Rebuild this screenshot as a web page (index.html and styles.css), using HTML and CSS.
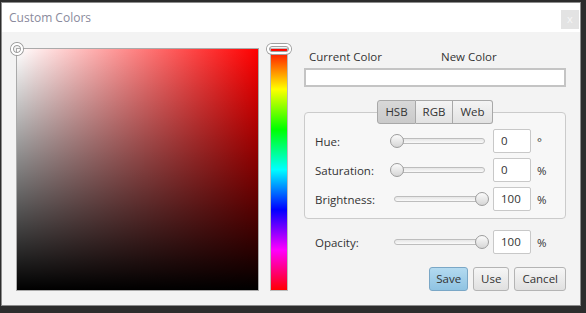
FILE: index.html
```html
<!DOCTYPE html>
<html>
<head>
<meta charset="utf-8">
<link rel="stylesheet" href="styles.css">
</head>
<body>
<div class="dialog">
  <div class="titlebar">
    <span class="title">Custom Colors</span>
    <span class="close">x</span>
  </div>
  <div class="content">
    <div class="picker">
      <div class="square">
        <div class="square-dark"></div>
        <div class="square-handle"></div>
      </div>
      <div class="huebar">
        <div class="hue-handle"></div>
      </div>
    </div>
    <div class="panel">
      <div class="color-labels">
        <span class="cur-label">Current Color</span>
        <span class="new-label">New Color</span>
      </div>
      <div class="preview"></div>
      <div class="tabs">
        <span class="tab active">HSB</span><span class="tab">RGB</span><span class="tab">Web</span>
      </div>
      <div class="group">
        <div class="row">
          <span class="label">Hue:</span>
          <div class="slider"><div class="track"></div><div class="thumb thumb-min"></div></div>
          <span class="field">0</span>
          <span class="unit">°</span>
        </div>
        <div class="row">
          <span class="label">Saturation:</span>
          <div class="slider"><div class="track"></div><div class="thumb thumb-min"></div></div>
          <span class="field">0</span>
          <span class="unit">%</span>
        </div>
        <div class="row">
          <span class="label">Brightness:</span>
          <div class="slider"><div class="track"></div><div class="thumb thumb-max"></div></div>
          <span class="field">100</span>
          <span class="unit">%</span>
        </div>
      </div>
      <div class="row opacity-row">
        <span class="label">Opacity:</span>
        <div class="slider"><div class="track"></div><div class="thumb thumb-max"></div></div>
        <span class="field">100</span>
        <span class="unit">%</span>
      </div>
      <div class="buttons">
        <span class="btn btn-default">Save</span>
        <span class="btn">Use</span>
        <span class="btn">Cancel</span>
      </div>
    </div>
  </div>
</div>
</body>
</html>
```
FILE: styles.css
```css
html, body {
  margin: 0;
  padding: 0;
  background: #2c2c2c;
  width: 586px;
  height: 313px;
  overflow: hidden;
}
body {
  font-family: "Open Sans", "Noto Sans", sans-serif;
  font-size: 11px;
  color: #333;
}
.dialog {
  margin: 2px 0 0 1px;
  width: 580px;
  height: 304px;
  box-sizing: border-box;
  border: 1px solid #8c8c8c;
  background: #f3f3f3;
  display: flex;
  flex-direction: column;
}
.titlebar {
  height: 29px;
  background: #ffffff;
  display: flex;
  align-items: flex-start;
  padding-left: 7px;
  padding-right: 1px;
  flex: none;
}
.title {
  margin-top: 6px;
  font-size: 12px;
  color: #8a8a9c;
  line-height: 18px;
}
.close {
  margin-left: auto;
  margin-top: 7px;
  width: 18px;
  height: 19px;
  background: #e3e3e3;
  color: #f6f6f6;
  font-size: 11px;
  line-height: 18px;
  text-align: center;
}
.content {
  display: flex;
  padding: 16px 0 0 14px;
}
.picker {
  display: flex;
  gap: 11px;
}
.square {
  position: relative;
  width: 243px;
  height: 243px;
  box-sizing: border-box;
  border: 1px solid #aaaaaa;
  background: linear-gradient(to right, #ffffff, #ff0000);
}
.square-dark {
  position: absolute;
  inset: 0;
  background: linear-gradient(to bottom, rgba(0,0,0,0), #000000);
}
.square-handle {
  position: absolute;
  left: -6px;
  top: -6px;
  width: 8px;
  height: 8px;
  border-radius: 50%;
  border: 2px solid #ffffff;
  box-shadow: 0 0 0 1px #9a9a9a, inset 0 0 0 1px #9a9a9a;
  background: transparent;
}
.huebar {
  position: relative;
  width: 18px;
  height: 243px;
  box-sizing: border-box;
  border: 1px solid #bbbbbb;
  background: linear-gradient(to bottom, #ff0000 0%, #ffff00 16.67%, #00ff00 33.33%, #00ffff 50%, #0000ff 66.67%, #ff00ff 83.33%, #ff0000 100%);
}
.hue-handle {
  position: absolute;
  left: -4px;
  top: -5px;
  width: 20px;
  height: 6px;
  border-radius: 5px;
  border: 2px solid #ffffff;
  box-shadow: 0 0 0 1px #a0a0a0, inset 0 0 0 1px #a0a0a0;
}
.panel {
  margin-left: 16px;
  width: 262px;
  display: flex;
  flex-direction: column;
}
.color-labels {
  display: flex;
  height: 18px;
  line-height: 18px;
  font-size: 11.5px;
  margin-top: 0;
}
.cur-label {
  margin-left: 5px;
}
.new-label {
  margin-left: 59px;
}
.preview {
  margin-top: 2px;
  height: 19px;
  box-sizing: border-box;
  border: 2px solid #c4c4c4;
  background: #ffffff;
}
.tabs {
  margin-top: 13px;
  align-self: center;
  display: flex;
  position: relative;
  z-index: 1;
}
.tab {
  height: 24px;
  box-sizing: border-box;
  line-height: 22px;
  padding: 0 7px;
  border: 1px solid #a8a8a8;
  border-left-width: 0;
  background: linear-gradient(to bottom, #f4f4f4, #e2e2e2);
  font-size: 11.5px;
}
.tab:first-child {
  border-left-width: 1px;
  border-radius: 3px 0 0 3px;
}
.tab:last-child {
  border-radius: 0 3px 3px 0;
}
.tab.active {
  background: linear-gradient(to bottom, #d8d8d8, #cacaca);
}
.group {
  margin-top: -12px;
  height: 107px;
  box-sizing: border-box;
  border: 1px solid #cbcbcb;
  border-radius: 4px;
  background: #f7f7f7;
  padding: 16px 0 0 10px;
  display: flex;
  flex-direction: column;
  gap: 5px;
}
.row {
  display: flex;
  align-items: center;
  height: 24px;
}
.label {
  width: 75px;
  font-size: 11.5px;
}
.slider {
  position: relative;
  width: 99px;
  height: 14px;
}
.track {
  position: absolute;
  left: 4px;
  right: 4px;
  top: 4px;
  height: 6px;
  box-sizing: border-box;
  border: 1px solid #bdbdbd;
  border-radius: 3px;
  background: linear-gradient(to bottom, #e6e6e6, #fafafa);
}
.thumb {
  position: absolute;
  top: 0;
  width: 14px;
  height: 14px;
  box-sizing: border-box;
  border: 1px solid #9c9c9c;
  border-radius: 50%;
  background: linear-gradient(to bottom, #fbfbfb, #d6d6d6);
}
.thumb-min {
  left: 0;
}
.thumb-max {
  right: 0;
}
.field {
  margin-left: 4px;
  width: 38px;
  height: 24px;
  box-sizing: border-box;
  border: 1px solid #c8c8c8;
  border-radius: 2px;
  background: #ffffff;
  padding-left: 7px;
  line-height: 22px;
  font-size: 11.5px;
}
.unit {
  margin-left: 6px;
  font-size: 11.5px;
}
.opacity-row {
  margin-top: 11px;
  padding-left: 11px;
}
.buttons {
  margin-top: 13px;
  display: flex;
  justify-content: flex-end;
  gap: 5px;
}
.btn {
  height: 24px;
  box-sizing: border-box;
  line-height: 22px;
  padding: 0 7px;
  border: 1px solid #b4b4b4;
  border-radius: 3px;
  background: linear-gradient(to bottom, #f6f6f6, #e0e0e0);
  font-size: 11.5px;
}
.btn-default {
  padding: 0 6px;
  border-color: #7aa7c6;
  background: linear-gradient(to bottom, #b3daf0, #8fc3e2);
}
```
